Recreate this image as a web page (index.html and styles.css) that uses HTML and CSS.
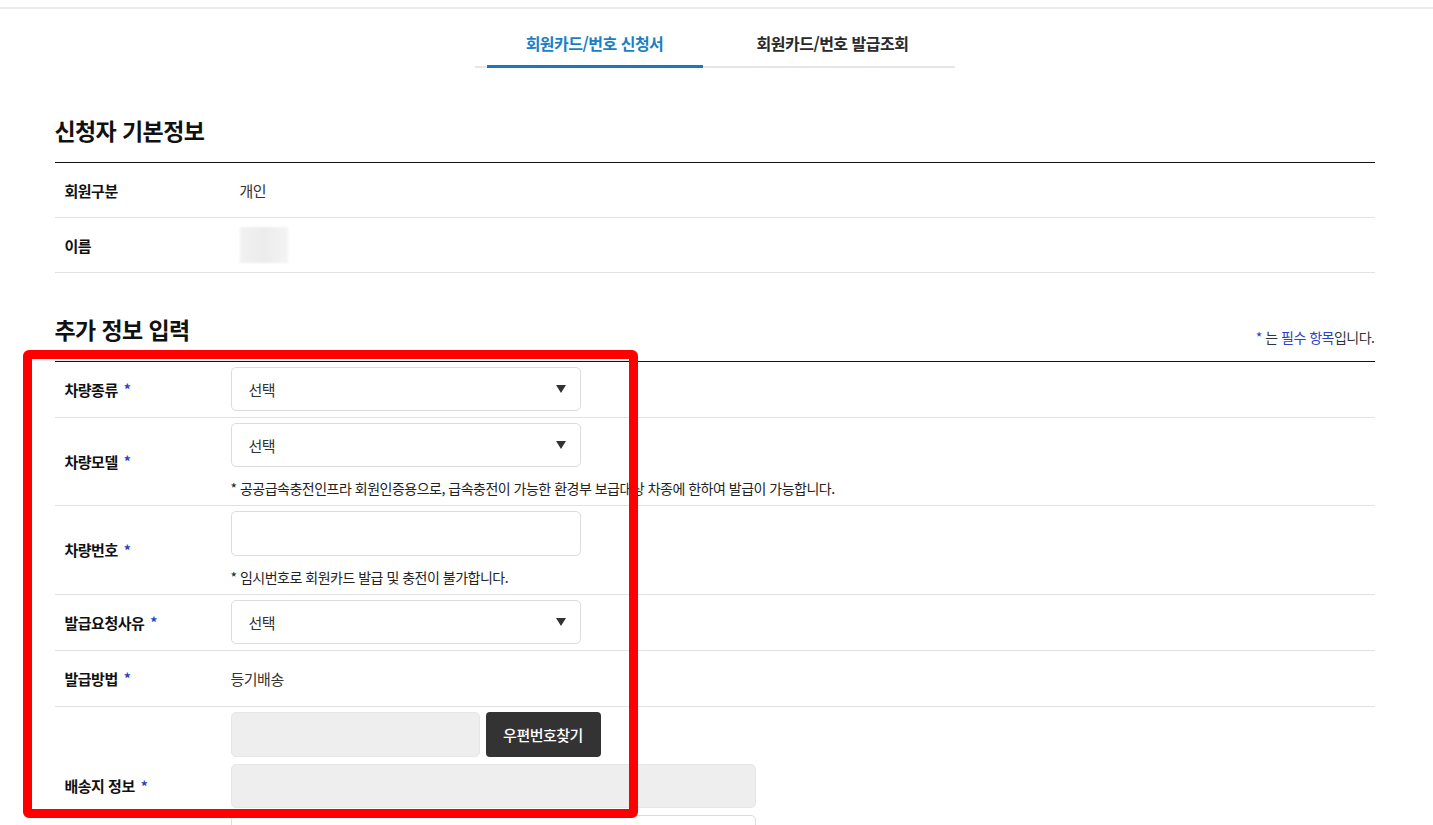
FILE: index.html
```html
<!DOCTYPE html>
<html lang="ko">
<head>
<meta charset="utf-8">
<title>회원카드/번호 신청서</title>
<link rel="stylesheet" href="styles.css">
</head>
<body>
<header class="topbar"></header>
<nav class="tabs">
  <a class="tab active">회원카드/번호 신청서</a>
  <a class="tab">회원카드/번호 발급조회</a>
</nav>
<main class="content">
  <section class="section">
    <div class="sec-head"><h2 class="sec-title">신청자 기본정보</h2></div>
    <div class="table info">
      <div class="row"><div class="th">회원구분</div><div class="td">개인</div></div>
      <div class="row"><div class="th">이름</div><div class="td"><span class="blur-name"></span></div></div>
    </div>
  </section>

  <section class="section">
    <div class="sec-head">
      <h2 class="sec-title">추가 정보 입력</h2>
      <p class="req-note"><span class="blue">*</span> 는 <span class="blue">필수 항목</span>입니다.</p>
    </div>
    <div class="table form">
      <div class="row">
        <div class="th">차량종류<span class="star">*</span></div>
        <div class="td"><div class="select"><span>선택</span><svg class="arrow" width="10" height="8" viewBox="0 0 10 8"><polygon points="0,0 10,0 5,8" fill="#333"/></svg></div></div>
      </div>
      <div class="row">
        <div class="th">차량모델<span class="star">*</span></div>
        <div class="td">
          <div class="select"><span>선택</span><svg class="arrow" width="10" height="8" viewBox="0 0 10 8"><polygon points="0,0 10,0 5,8" fill="#333"/></svg></div>
          <p class="note">* 공공급속충전인프라 회원인증용으로, 급속충전이 가능한 환경부 보급대상 차종에 한하여 발급이 가능합니다.</p>
        </div>
      </div>
      <div class="row">
        <div class="th">차량번호<span class="star">*</span></div>
        <div class="td">
          <div class="input"></div>
          <p class="note">* 임시번호로 회원카드 발급 및 충전이 불가합니다.</p>
        </div>
      </div>
      <div class="row">
        <div class="th">발급요청사유<span class="star">*</span></div>
        <div class="td"><div class="select"><span>선택</span><svg class="arrow" width="10" height="8" viewBox="0 0 10 8"><polygon points="0,0 10,0 5,8" fill="#333"/></svg></div></div>
      </div>
      <div class="row">
        <div class="th">발급방법<span class="star">*</span></div>
        <div class="td text">등기배송</div>
      </div>
      <div class="row">
        <div class="th">배송지 정보<span class="star">*</span></div>
        <div class="td addr">
          <div class="zip-line"><div class="input gray zip"></div><button class="btn-dark">우편번호찾기</button></div>
          <div class="input gray wide"></div>
          <div class="input wide"></div>
        </div>
      </div>
    </div>
  </section>
</main>
<div class="highlight"></div>
</body>
</html>
```

FILE: styles.css
```css
html, body {
  margin: 0;
  padding: 0;
  overflow: hidden;
  background: #fff;
}
body {
  padding-right: 4px;
  font-family: "Noto Sans CJK KR", "Noto Sans", sans-serif;
  color: #222;
  letter-spacing: -0.5px;
}
.topbar {
  height: 7px;
  margin-right: -4px;
  border-bottom: 2px solid #ececec;
}
.tabs {
  width: 480px;
  margin: 11px auto 0;
  padding: 0 12px;
  box-sizing: border-box;
  display: flex;
  gap: 22px;
  border-bottom: 2px solid #e6e6e6;
}
.tab {
  width: 216px;
  text-align: center;
  font-size: 16px;
  line-height: 22px;
  padding: 12px 0 11px;
  margin-bottom: -2px;
  border-bottom: 3px solid transparent;
  color: #2a2a2a;
  font-weight: 600;
}
.tab.active {
  color: #1a7fc6;
  font-weight: 700;
  border-bottom-color: #1a78c2;
}
.content {
  width: 1320px;
  margin: 0 auto;
}
.section {
  margin-top: 47px;
}
.section + .section {
  margin-top: 41px;
}
.sec-head {
  display: flex;
  justify-content: space-between;
  align-items: flex-end;
  padding-bottom: 15px;
}
.sec-title {
  margin: 0;
  font-size: 23px;
  line-height: 30px;
  padding-bottom: 2px;
  font-weight: 700;
  color: #111;
  letter-spacing: -0.6px;
}
.req-note {
  margin: 0 0 -1px;
  font-size: 14px;
  line-height: 20px;
  color: #333;
}
.blue { color: #2b3fc9; }
.table {
  border-top: 1px solid #111;
}
.row {
  display: flex;
  border-bottom: 1px solid #e2e2e2;
  padding: 5px 0;
  min-height: 44px;
}
.form .row {
  padding-bottom: 6px;
}
.th {
  flex: 0 0 auto;
  box-sizing: border-box;
  padding-left: 10px;
  display: flex;
  align-items: center;
  font-size: 15px;
  font-weight: 700;
  color: #111;
}
.info .th { width: 185px; }
.form .th { width: 176px; }
.td {
  display: flex;
  flex-direction: column;
  justify-content: center;
  font-size: 15px;
  color: #333;
}
.star {
  color: #2b3fc9;
  margin-left: 6px;
  font-size: 14px;
}
.blur-name {
  display: block;
  width: 48px;
  height: 36px;
  background: linear-gradient(90deg, #f1f1f1 0%, #ececec 50%, #f4f4f4 100%);
  filter: blur(1px);
}
.select, .input {
  box-sizing: border-box;
  width: 350px;
  height: 44px;
  border: 1px solid #dcdcdc;
  border-radius: 5px;
  background: #fff;
}
.input { height: 45px; }
.select {
  display: flex;
  align-items: center;
  justify-content: space-between;
  padding: 0 14px 0 17px;
  font-size: 15px;
  color: #333;
}
.note {
  margin: 10px 0 0;
  font-size: 14px;
  line-height: 22px;
  color: #222;
}
.addr {
  gap: 7px;
}
.zip-line {
  display: flex;
  gap: 6px;
}
.input.gray {
  background: #eeeeee;
  border-color: #e6e6e6;
}
.input.zip { width: 249px; }
.input.wide { width: 525px; height: 44px; }
.btn-dark {
  width: 115px;
  height: 45px;
  border: none;
  border-radius: 4px;
  background: #333;
  color: #fff;
  font-family: inherit;
  font-size: 15px;
  font-weight: 500;
  letter-spacing: -0.5px;
}
.highlight {
  position: absolute;
  left: 23px;
  top: 350px;
  width: 615px;
  height: 468px;
  box-sizing: border-box;
  border: 9px solid #ff0000;
  border-radius: 6px;
  pointer-events: none;
}
```
